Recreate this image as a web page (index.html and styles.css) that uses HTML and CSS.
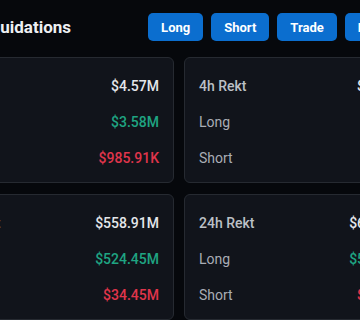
FILE: index.html
```html
<!DOCTYPE html>
<html>
<head>
    <link rel="stylesheet" href="styles.css">
</head>
<body>
    <div class="page">
        <!-- Encabezado con titulo y acciones -->
        <div class="header">
            <h1 class="title">Liquidations</h1>
            <div class="actions">
                <button type="button" class="btn">Long</button>
                <button type="button" class="btn">Short</button>
                <button type="button" class="btn">Trade</button>
                <button type="button" class="btn">Exchange</button>
            </div>
        </div>

        <!-- Tarjetas de liquidaciones -->
        <div class="cards">
            <div class="card">
                <div class="row"><span class="label strong">1h Rekt</span><span class="value">$4.57M</span></div>
                <div class="row"><span class="label">Long</span><span class="value up">$3.58M</span></div>
                <div class="row"><span class="label">Short</span><span class="value down">$985.91K</span></div>
            </div>
            <div class="card">
                <div class="row"><span class="label strong">4h Rekt</span><span class="value">$48.27M</span></div>
                <div class="row"><span class="label">Long</span><span class="value up">$9.34M</span></div>
                <div class="row"><span class="label">Short</span><span class="value down">$6.28M</span></div>
            </div>
            <div class="card">
                <div class="row"><span class="label strong">8h Rekt</span><span class="value">$97.04M</span></div>
                <div class="row"><span class="label">Long</span><span class="value up">$84.71M</span></div>
                <div class="row"><span class="label">Short</span><span class="value down">$12.33M</span></div>
            </div>
            <div class="card">
                <div class="row"><span class="label strong">12h Rekt</span><span class="value">$558.91M</span></div>
                <div class="row"><span class="label">Long</span><span class="value up">$524.45M</span></div>
                <div class="row"><span class="label">Short</span><span class="value down">$34.45M</span></div>
            </div>
            <div class="card">
                <div class="row"><span class="label strong">24h Rekt</span><span class="value">$623.48M</span></div>
                <div class="row"><span class="label">Long</span><span class="value up">$582.12M</span></div>
                <div class="row"><span class="label">Short</span><span class="value down">$41.36M</span></div>
            </div>
            <div class="card">
                <div class="row"><span class="label strong">7d Rekt</span><span class="value">$2.41B</span></div>
                <div class="row"><span class="label">Long</span><span class="value up">$1.87B</span></div>
                <div class="row"><span class="label">Short</span><span class="value down">$540.22M</span></div>
            </div>
        </div>
    </div>
</body>
</html>
```

FILE: styles.css
```css
/* Estilos generales */
body {
    margin: 0;
    background-color: #06080c;
    font-family: Roboto, "Liberation Sans", sans-serif;
    overflow: hidden;
}

/* Contenedor desplazado (la vista muestra solo una parte) */
.page {
    width: 752px;
    margin-left: -70px;
    padding-top: 13px;
}

/* Encabezado */
.header {
    display: flex;
    align-items: center;
    height: 28px;
    padding-left: 47px;
}

.title {
    margin: 0;
    font-size: 17px;
    font-weight: 700;
    color: #eef0f3;
}

.actions {
    display: flex;
    gap: 8px;
    margin-left: 77px;
}

/* Botones */
.btn {
    height: 28px;
    padding: 0 13px;
    background-color: #0b6ecf;
    color: #fff;
    border: none;
    border-radius: 5px;
    font-family: Roboto, sans-serif;
    font-size: 13px;
    font-weight: 700;
    cursor: pointer;
}

.btn:hover {
    background-color: #0a5fb3;
}

/* Rejilla de tarjetas */
.cards {
    display: grid;
    grid-template-columns: repeat(3, 244px);
    column-gap: 10px;
    row-gap: 11px;
    margin-top: 16px;
}

.card {
    background-color: #11141b;
    border: 1px solid #262a31;
    border-radius: 6px;
    padding: 10px 14px 6px;
}

.row {
    display: flex;
    justify-content: space-between;
    align-items: center;
    height: 36px;
}

.label {
    font-size: 14px;
    color: #a9adb5;
}

.label.strong {
    font-weight: 500;
    color: #bcc0c6;
}

.value {
    font-size: 14px;
    font-weight: 500;
    color: #e4e6ea;
}

.value.up {
    color: #1fa482;
}

.value.down {
    color: #e0354b;
}
```
